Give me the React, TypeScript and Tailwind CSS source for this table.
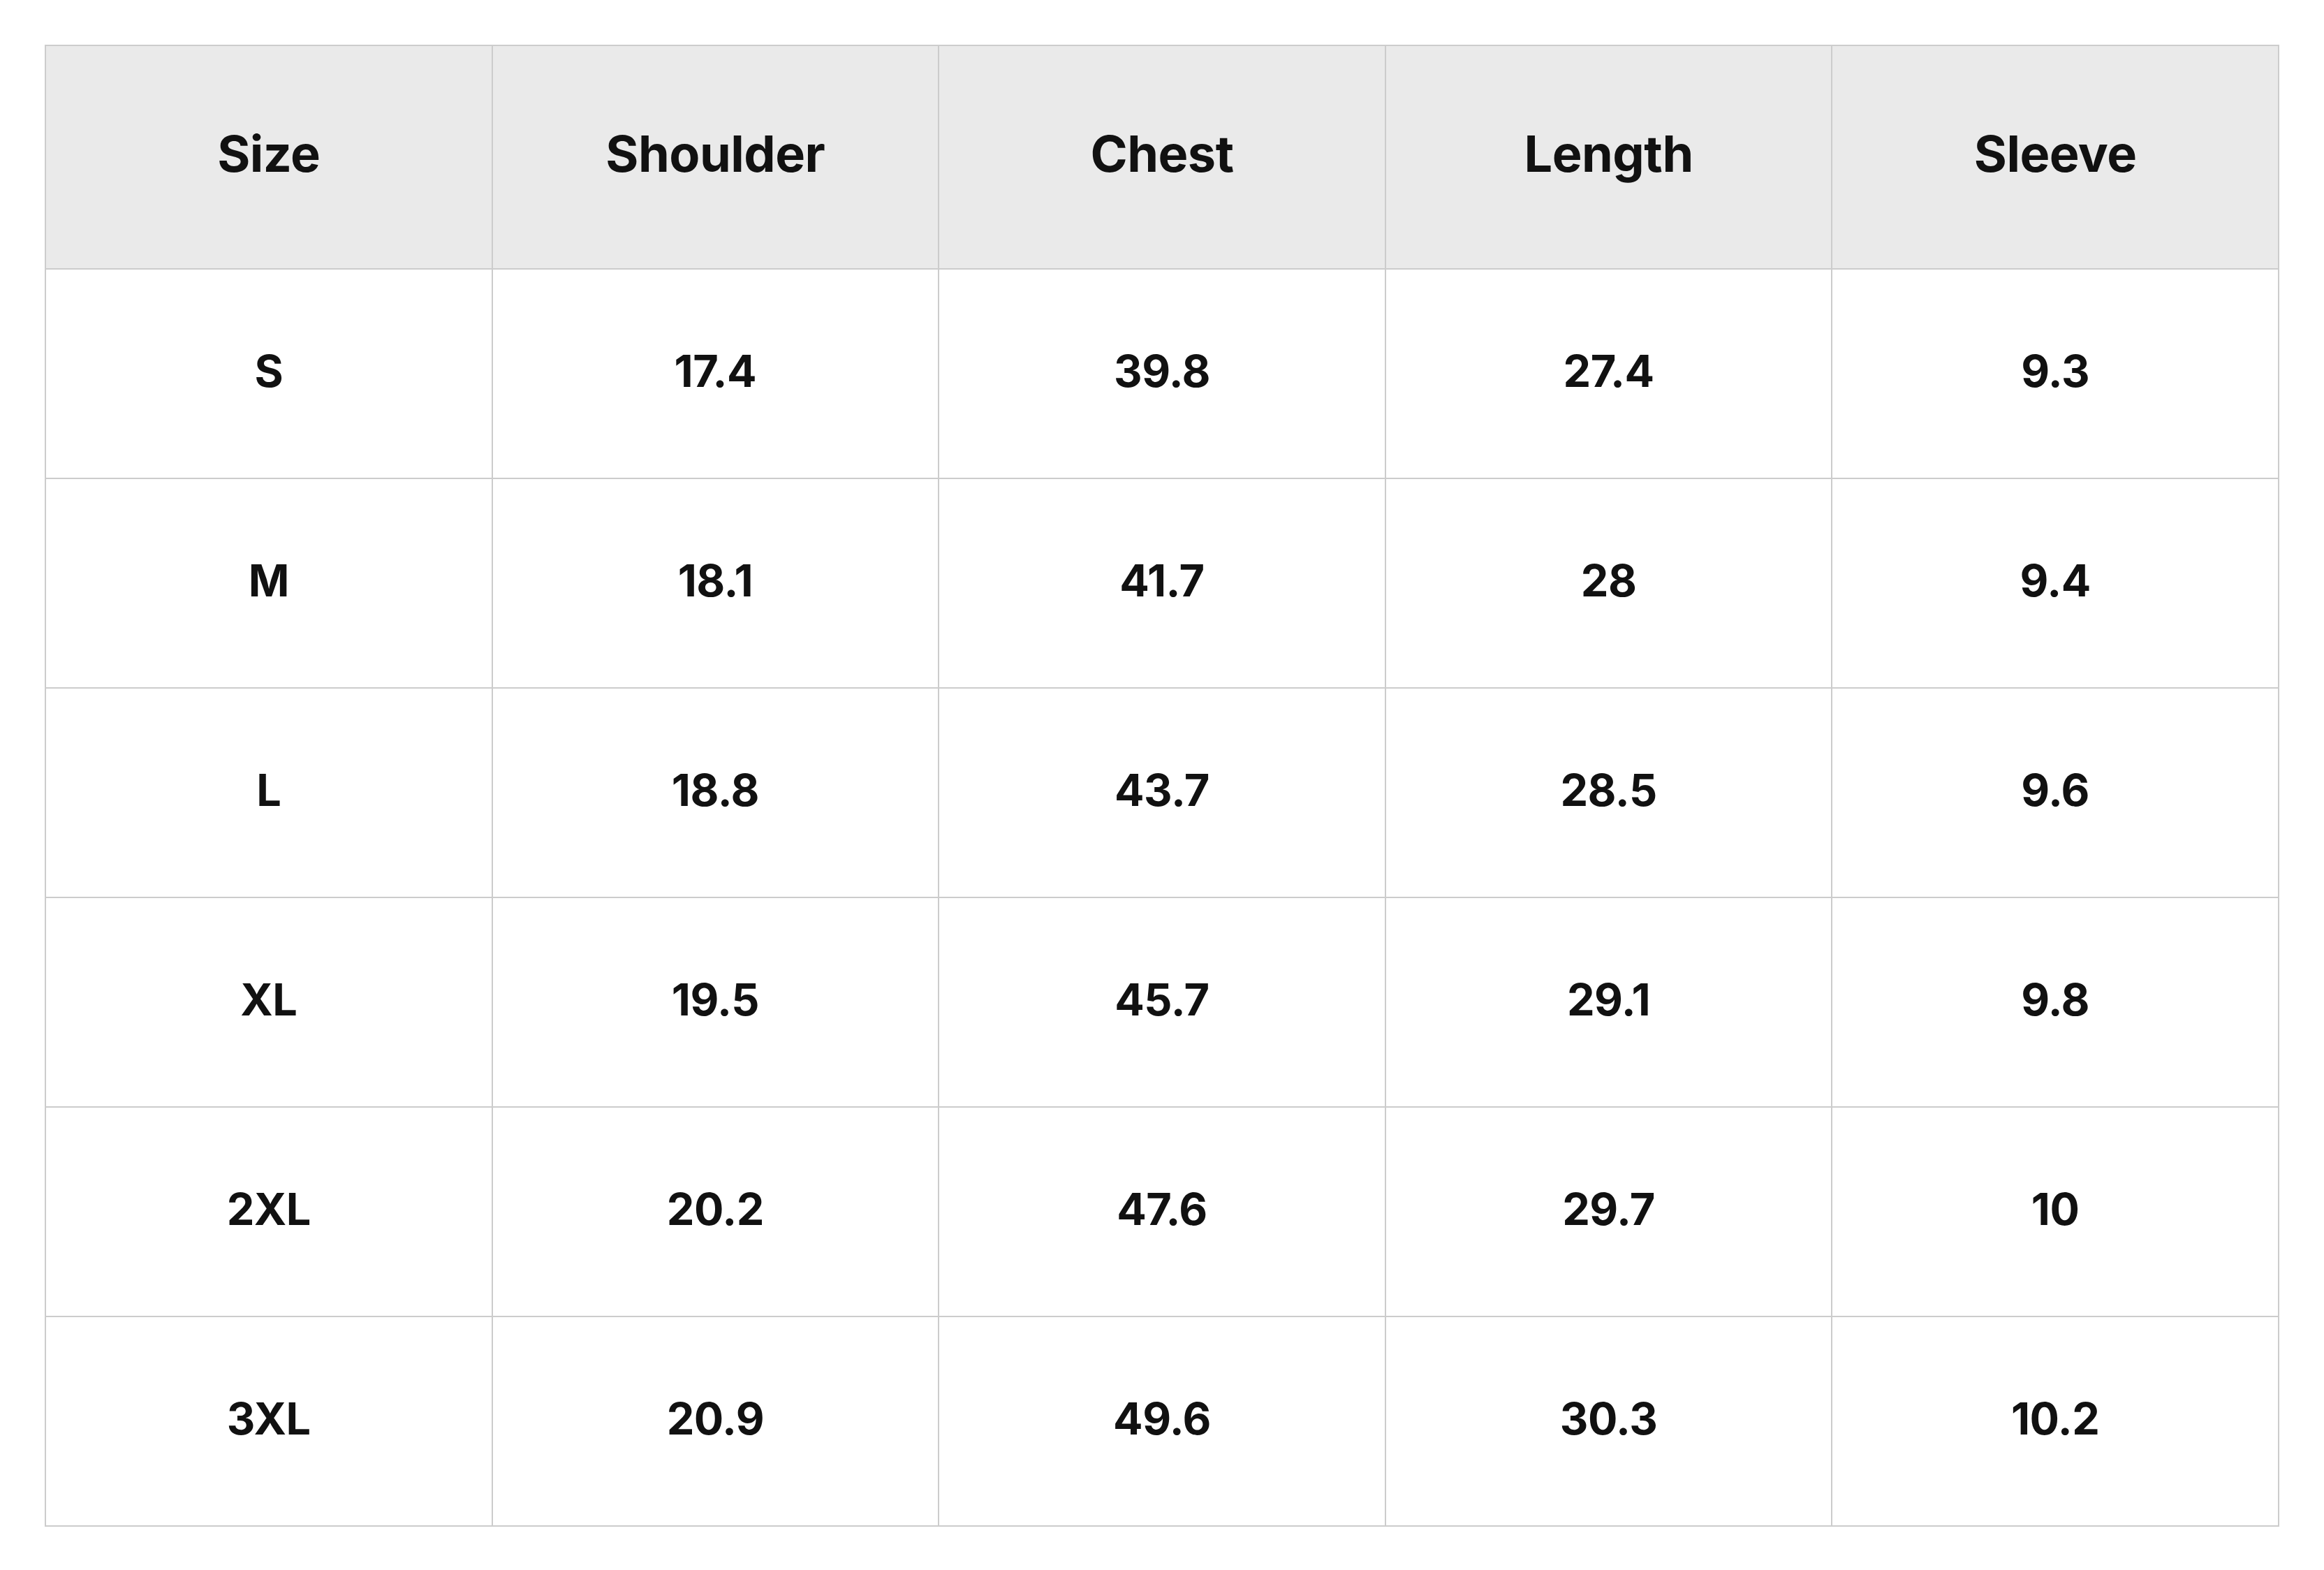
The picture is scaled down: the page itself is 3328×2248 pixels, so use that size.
const HEADERS = ['Size', 'Shoulder', 'Chest', 'Length', 'Sleeve']

const ROWS = [
  ['S', '17.4', '39.8', '27.4', '9.3'],
  ['M', '18.1', '41.7', '28', '9.4'],
  ['L', '18.8', '43.7', '28.5', '9.6'],
  ['XL', '19.5', '45.7', '29.1', '9.8'],
  ['2XL', '20.2', '47.6', '29.7', '10'],
  ['3XL', '20.9', '49.6', '30.3', '10.2'],
]

export default function App() {
  return (
    <div className="min-h-screen bg-white p-[64px] font-['Inter','Liberation_Sans',sans-serif] text-[#111111]">
      <table className="w-[3200px] table-fixed border-collapse border-2 border-[#cccccc]">
        <thead>
          <tr>
            {HEADERS.map((h) => (
              <th
                key={h}
                className="h-[320px] border-2 border-[#cccccc] bg-[#eaeaea] pb-[10px] text-center align-middle text-[72px] font-bold tracking-[-0.5px]"
              >
                {h}
              </th>
            ))}
          </tr>
        </thead>
        <tbody>
          {ROWS.map((row) => (
            <tr key={row[0]}>
              {row.map((cell, i) => (
                <td
                  key={i}
                  className="h-[300px] border-2 border-[#cccccc] pb-[8px] text-center align-middle text-[63px] font-bold tracking-[-0.5px]"
                >
                  {cell}
                </td>
              ))}
            </tr>
          ))}
        </tbody>
      </table>
    </div>
  )
}
